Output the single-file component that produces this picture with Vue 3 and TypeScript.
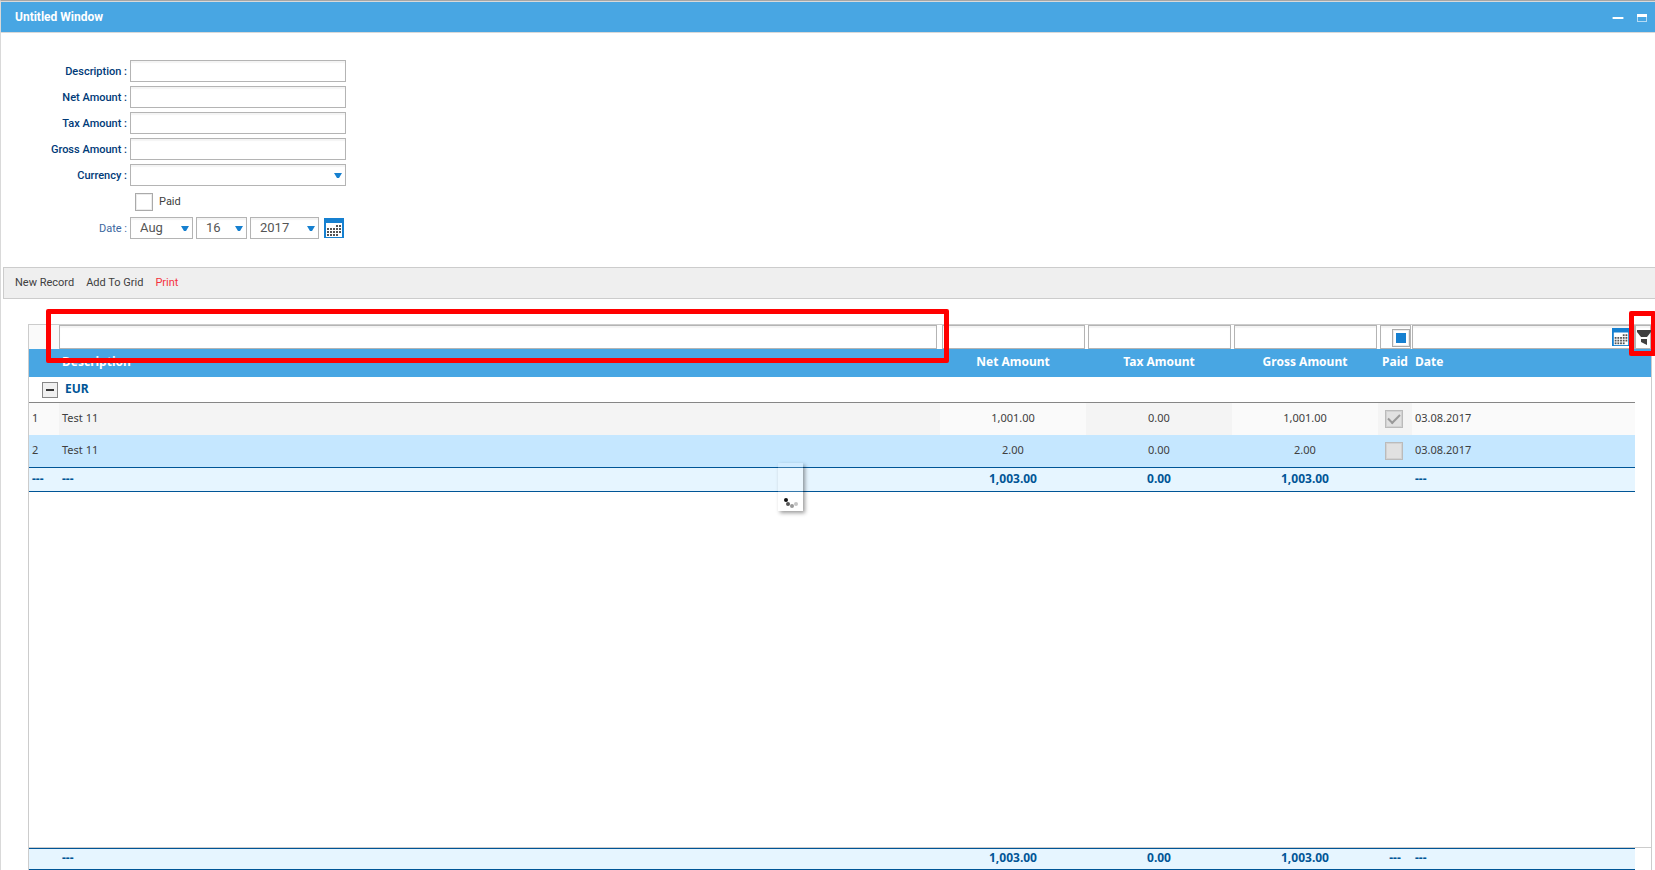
<script setup lang="ts">
import { ref } from 'vue'

interface Row {
  id: number
  description: string
  net: string
  tax: string
  gross: string
  paid: boolean
  date: string
}

const textFields = [
  { id: 'description', label: 'Description' },
  { id: 'net', label: 'Net Amount' },
  { id: 'tax', label: 'Tax Amount' },
  { id: 'gross', label: 'Gross Amount' },
]

const dateParts = [
  { id: 'month', label: 'Month', value: 'Aug' },
  { id: 'day', label: 'Day', value: '16' },
  { id: 'year', label: 'Year', value: '2017' },
]

const amountColumns = ['Net Amount', 'Tax Amount', 'Gross Amount']

const rows: Row[] = [
  { id: 1, description: 'Test 11', net: '1,001.00', tax: '0.00', gross: '1,001.00', paid: true, date: '03.08.2017' },
  { id: 2, description: 'Test 11', net: '2.00', tax: '0.00', gross: '2.00', paid: false, date: '03.08.2017' },
]

const totals = ['1,003.00', '0.00', '1,003.00']

const calendarDots = [
  [12, 7], [15, 7],
  [3, 10], [6, 10], [9, 10], [12, 10], [15, 10],
  [3, 13], [6, 13], [9, 13], [12, 13], [15, 13],
  [3, 16], [6, 16], [9, 16], [12, 16],
]

const selectedId = ref(2)
</script>

<template>
  <div class="window">
    <header class="titlebar">
      <h1>Untitled Window</h1>
      <div class="window-buttons">
        <button type="button" aria-label="Minimize">
          <svg width="12" height="12" viewBox="0 0 12 12"><path d="M1 5h10v2H1z" fill="#fff" /><path d="M0 5h12v2H0z" fill="#fff" opacity=".4" /></svg>
        </button>
        <button type="button" aria-label="Maximize">
          <svg width="12" height="12" viewBox="0 0 12 12"><path d="M1 2h10v3H1z" fill="#fff" /><path d="M1 2h10v8H1zM2 5v4h8V5z" fill="#fff" fill-rule="evenodd" opacity=".6" /></svg>
        </button>
      </div>
    </header>

    <form class="form" @submit.prevent>
      <div v-for="f in textFields" :key="f.id" class="field">
        <label :for="f.id">{{ f.label }} :</label>
        <input :id="f.id" class="box wide" type="text" />
      </div>
      <div class="field">
        <label for="currency">Currency :</label>
        <span class="picker wide">
          <select id="currency" class="box"><option></option></select>
          <svg width="8" height="5" viewBox="0 0 8 5"><path d="M0 0h8L5 5H3z" fill="#1680d0" /></svg>
        </span>
      </div>
      <div class="check-field">
        <input id="paid" class="check" type="checkbox" />
        <label for="paid">Paid</label>
      </div>
      <div class="field date-field">
        <label for="month">Date :</label>
        <span v-for="p in dateParts" :key="p.id" class="picker" :class="p.id">
          <select :id="p.id" class="box" :aria-label="p.label"><option>{{ p.value }}</option></select>
          <svg width="8" height="5" viewBox="0 0 8 5"><path d="M0 0h8L5 5H3z" fill="#1680d0" /></svg>
        </span>
        <button type="button" class="icon-button" aria-label="Choose date">
          <svg width="20" height="20" viewBox="0 0 20 20">
            <path d="M0 0h20v20H0z" fill="#1680d0" /><path d="M2 5h16v14H2z" fill="#fff" />
            <rect v-for="(d, i) in calendarDots" :key="i" :x="d[0]" :y="d[1]" width="2" height="2" fill="#555" />
          </svg>
        </button>
      </div>
    </form>

    <nav class="toolbar">
      <button type="button">New Record</button>
      <button type="button">Add To Grid</button>
      <button type="button" class="print">Print</button>
    </nav>

    <main class="grid">
      <table>
        <colgroup>
          <col class="c-num" /><col /><col class="c-amount" /><col class="c-amount" /><col class="c-amount" />
          <col class="c-paid" /><col class="c-date" /><col class="c-scroll" />
        </colgroup>
        <thead>
          <tr class="filters">
            <td class="num"></td>
            <td class="first"><input class="box" type="text" aria-label="Filter description" /></td>
            <td v-for="c in amountColumns" :key="c"><input class="box" type="text" :aria-label="'Filter ' + c" /></td>
            <td>
              <div class="box paid-filter"><input class="check" type="checkbox" :indeterminate="true" aria-label="Filter paid" /></div>
            </td>
            <td class="date-filter">
              <div class="box date-box">
                <input type="text" aria-label="Filter date" />
                <button type="button" class="icon-button" aria-label="Choose filter date">
                  <svg width="18" height="18" viewBox="0 0 20 20">
                    <path d="M0 0h20v20H0z" fill="#1680d0" /><path d="M2 5h16v14H2z" fill="#fff" />
                    <rect v-for="(d, i) in calendarDots" :key="i" :x="d[0]" :y="d[1]" width="2" height="2" fill="#555" />
                  </svg>
                </button>
              </div>
            </td>
            <td class="funnel">
              <button type="button" class="box" aria-label="Apply filter">
                <svg width="14" height="15" viewBox="0 0 14 15"><path d="M0 0h14v2L10 7H4L0 2z" fill="#404040" /><path d="M4 9h6v6L4 12z" fill="#404040" /></svg>
              </button>
            </td>
          </tr>
          <tr class="heads">
            <th></th>
            <th class="left">Description</th>
            <th v-for="c in amountColumns" :key="c">{{ c }}</th>
            <th>Paid</th>
            <th class="left">Date</th>
            <th></th>
          </tr>
        </thead>
        <tbody>
          <tr class="group">
            <td colspan="7">
              <div>
                <button type="button" aria-label="Collapse EUR"></button>
                <span>EUR</span>
              </div>
            </td>
          </tr>
          <tr v-for="r in rows" :key="r.id" class="record" :class="{ selected: r.id === selectedId }" @click="selectedId = r.id">
            <td class="num">{{ r.id }}</td>
            <td class="left">{{ r.description }}</td>
            <td>{{ r.net }}</td>
            <td>{{ r.tax }}</td>
            <td>{{ r.gross }}</td>
            <td class="paid"><input class="check" type="checkbox" :checked="r.paid" disabled :aria-label="'Paid, row ' + r.id" /></td>
            <td class="left">{{ r.date }}</td>
          </tr>
          <tr class="total">
            <td class="num">---</td>
            <td class="left">---</td>
            <td v-for="(t, i) in totals" :key="i">{{ t }}</td>
            <td></td>
            <td class="left">---</td>
          </tr>
        </tbody>
      </table>

      <div class="summary">
        <table>
          <colgroup>
            <col class="c-num" /><col /><col class="c-amount" /><col class="c-amount" /><col class="c-amount" />
            <col class="c-paid" /><col class="c-date" />
          </colgroup>
          <tbody>
            <tr class="total">
              <td></td>
              <td class="left">---</td>
              <td v-for="(t, i) in totals" :key="i">{{ t }}</td>
              <td>---</td>
              <td class="left">---</td>
            </tr>
          </tbody>
        </table>
      </div>

      <div class="mark mark-filter"></div>
      <div class="mark mark-funnel"></div>
      <div class="loading">
        <svg width="14" height="10" viewBox="0 0 14 10">
          <circle cx="2" cy="2" r="2" fill="#111" /><circle cx="4" cy="6" r="2" fill="#555" />
          <circle cx="8" cy="8" r="2" fill="#999" /><circle cx="12" cy="6" r="2" fill="#c4c4c4" />
        </svg>
      </div>
    </main>
  </div>
</template>

<style>
html, body { background: #fff; }
</style>

<style scoped>
* { box-sizing: border-box; }
.window {
  display: flex;
  flex-direction: column;
  height: 100vh;
  overflow: hidden;
  border-top: 1px solid #a6a6a6;
  border-left: 1px solid #d9d9d9;
  font: 11px/14px Roboto, "Liberation Sans", sans-serif;
  color: #404040;
}
button { margin: 0; padding: 0; border: 0; background: none; font: inherit; color: inherit; }
svg { display: block; }
.titlebar {
  flex: none;
  display: flex;
  align-items: center;
  justify-content: space-between;
  height: 32px;
  padding: 1px 7px 0 14px;
  background: #48a6e3;
  border-top: 1px solid #d9d9d9;
  border-bottom: 1px solid #d9d9d9;
}
h1 { margin: 0; font-size: 12px; line-height: 15px; font-weight: 700; color: #fff; }
.window-buttons { display: flex; gap: 12px; }

.form { flex: none; display: flex; flex-direction: column; gap: 4px; padding: 27px 0 28px; }
.field { display: flex; align-items: center; gap: 3px; }
.field label { width: 126px; padding-top: 1px; text-align: right; color: #003a78; font-weight: 500; }
.box {
  display: block;
  width: 100%;
  height: 22px;
  margin: 0;
  padding: 0 8px;
  border: 1px solid #b4b4b4;
  border-radius: 0;
  background: #fff;
  box-shadow: inset 0 2px 1px #f4f4f4;
  outline: 0;
  appearance: none;
  font: 12px/20px Roboto, "Liberation Sans", sans-serif;
  color: #555;
}
.wide { width: 216px; }
.picker { position: relative; }
.picker svg { position: absolute; right: 4px; top: 9px; pointer-events: none; }
.month { width: 63px; }
.day { width: 51px; }
.year { width: 69px; }
.check-field { display: flex; align-items: center; gap: 6px; padding-left: 134px; height: 23px; }
.check {
  display: block;
  flex: none;
  width: 18px;
  height: 18px;
  margin: 0;
  border: 1px solid #aaa;
  box-shadow: inset 0 0 0 1px #ececec;
  background: #fff;
  appearance: none;
}
.date-field label { color: #3b66a0; font-weight: 400; }
.date-field .box { padding-left: 9px; font-size: 13px; }
.date-field .icon-button { margin-left: 2px; }

.toolbar {
  flex: none;
  display: flex;
  align-items: center;
  gap: 12px;
  height: 32px;
  margin-left: 2px;
  padding: 0 11px;
  border: 1px solid #ccc;
  border-right: 0;
  background: #efefef;
}
.toolbar .print { color: #f5323c; }

.grid {
  position: relative;
  flex: 1;
  display: flex;
  flex-direction: column;
  justify-content: space-between;
  margin: 25px 3px 0 27px;
  border: 1px solid #ccc;
  border-bottom: 0;
  font: 11px/14px "Noto Sans", "Open Sans", sans-serif;
}
table { width: 100%; table-layout: fixed; border-collapse: separate; border-spacing: 0; }
.c-num { width: 30px; }
.c-amount { width: 146px; }
.c-paid { width: 34px; }
.c-date { width: 223px; }
.c-scroll { width: 16px; }
td, th { padding: 0 3px; text-align: center; }
.left { text-align: left; }
.num { text-align: left; }

.filters td { height: 24px; padding: 0 1px 0 2px; }
.filters .num { background: #fafafa; }
.filters .first { padding: 0 3px 0 0; }
.filters .box { height: 24px; }
.filters .date-filter, .filters .funnel { padding: 0; }
.paid-filter { display: flex; justify-content: flex-end; align-items: center; padding: 2px 0 0; }
.check:indeterminate { background: #1680d0; background-clip: content-box; padding: 3px; }
.date-box { display: flex; justify-content: space-between; align-items: center; padding: 0 4px 0 8px; }
.date-box input { flex: 1; width: 0; border: 0; padding: 0; outline: 0; background: none; }
.funnel .box { padding: 0 0 0 1px; }

.heads th { height: 28px; padding-bottom: 2px; background: #48a6e3; color: #fff; font-size: 12px; font-weight: 700; }
.group td { height: 26px; padding: 0 0 0 13px; border-bottom: 1px solid #868686; }
.group div { display: flex; align-items: center; gap: 7px; color: #005596; font-size: 12px; font-weight: 700; }
.group span { padding-bottom: 2px; }
.group button { display: grid; place-items: center; width: 16px; height: 16px; border: 1px solid #888; background: #f0f0f0; }
.group button::before { content: ""; width: 8px; height: 2px; background: #333; }
.record td { height: 32px; padding-bottom: 2px; background: #f4f4f4; }
.record td:nth-child(odd) { background: #fafafa; }
.record.selected td { background: #c5e7ff; }
.record .paid { padding: 0 8px 0 7px; }
.record .check { border-color: #bbb; background: #e1e1e1; box-shadow: inset 0 0 0 1px #d2d2d2; }
.record .check:checked { display: grid; place-items: center; }
.record .check:checked::before {
  content: "";
  width: 10px;
  height: 5px;
  margin-bottom: 3px;
  border: solid #999;
  border-width: 0 0 2px 2px;
  transform: rotate(-45deg);
}
.total td {
  height: 25px;
  padding-bottom: 2px;
  border-top: 1px solid #005596;
  border-bottom: 1px solid #005596;
  background: #e6f5ff;
  color: #005596;
  font-size: 12px;
  font-weight: 700;
}
.summary { padding-right: 16px; border-top: 1px solid #ccc; }
.summary .total td { height: 22px; }

.mark { position: absolute; border: 5px solid #f00; border-radius: 2px; pointer-events: none; }
.mark-filter { top: -16px; left: 17px; right: 702px; height: 54px; }
.mark-funnel { top: -14px; right: -5px; width: 27px; height: 45px; }
.loading {
  position: absolute;
  top: 138px;
  left: calc(50% - 62px);
  display: flex;
  align-items: flex-end;
  justify-content: center;
  width: 25px;
  height: 48px;
  padding-bottom: 3px;
  background: rgba(255, 255, 255, .2);
  box-shadow: 2px 2px 4px rgba(0, 0, 0, .4);
}
</style>
